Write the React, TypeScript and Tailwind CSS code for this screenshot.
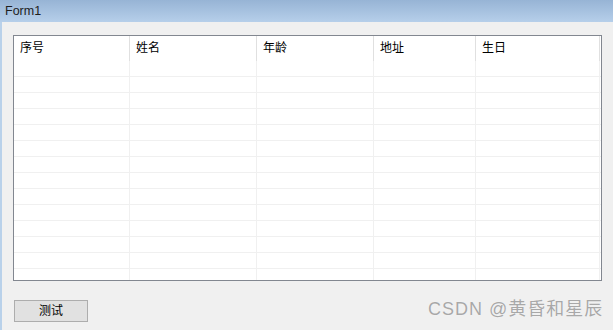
import React from 'react';

const columns = [
  { title: '序号', width: 116 },
  { title: '姓名', width: 127 },
  { title: '年龄', width: 117 },
  { title: '地址', width: 102 },
  { title: '生日', width: 124 },
];

const rows = Array.from({ length: 14 }, (_, i) => i);

const App: React.FC = () => {
  return (
    <div
      className="relative w-[613px] h-[330px] overflow-hidden bg-[#f0f0f0] flex flex-col"
      style={{ fontFamily: '"Liberation Sans", "Noto Sans CJK SC", sans-serif' }}
    >
      {/* Title bar */}
      <div className="h-[22px] shrink-0 bg-gradient-to-b from-[#97b4d5] to-[#b6cfea] flex items-center pl-[5px]">
        <span className="text-[12.5px] text-[#1e1e1e] leading-none">Form1</span>
      </div>

      {/* Client area */}
      <div className="flex-1 border-l-2 border-[#b9d1ea] pl-[11px] pt-[13px]">
        {/* ListView */}
        <div className="w-[589px] h-[246px] border border-[#828790] bg-white overflow-hidden">
          <div className="flex h-[25px]">
            {columns.map((c) => (
              <div
                key={c.title}
                style={{ width: c.width }}
                className="shrink-0 border-r border-[#e0e0e0] flex items-center pl-[6px] pb-[1px] text-[12px] text-black"
              >
                {c.title}
              </div>
            ))}
          </div>
          {rows.map((r) => (
            <div key={r} className="flex h-[16px] border-b border-[#f0f0f0]">
              {columns.map((c) => (
                <div
                  key={c.title}
                  style={{ width: c.width }}
                  className="shrink-0 border-r border-[#f0f0f0]"
                />
              ))}
            </div>
          ))}
        </div>

        {/* Button */}
        <div className="mt-[19px] ml-[1px]">
          <button className="w-[74px] h-[22px] border border-[#adadad] bg-[#e1e1e1] text-[12px] text-black flex items-center justify-center">
            测试
          </button>
        </div>
      </div>

      {/* Watermark */}
      <div className="absolute left-[428px] top-[300px] text-[18px] tracking-[1px] text-[#a8a8a8] leading-none whitespace-nowrap [text-shadow:0_0_1px_#ffffff]">
        CSDN @黄昏和星辰
      </div>
    </div>
  );
};

export default App;
